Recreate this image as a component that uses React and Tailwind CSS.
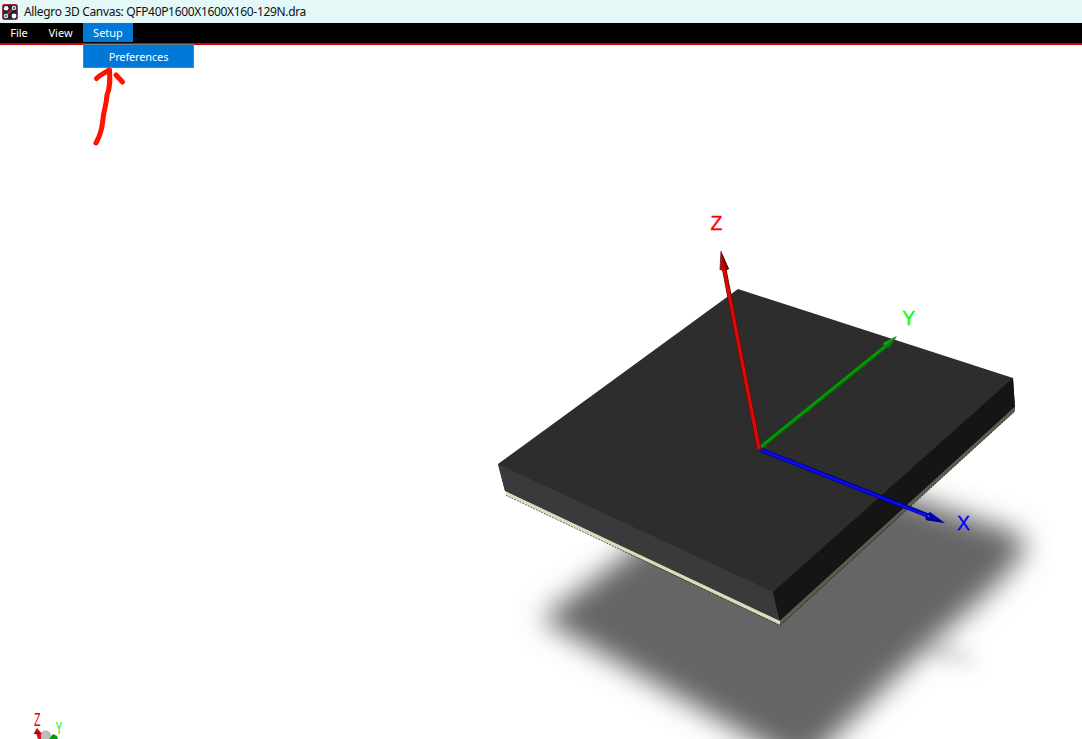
function AppIcon() {
  return (
    <svg className="size-4 shrink-0" viewBox="0 0 16 16">
      <rect x="0.7" y="0.7" width="14.6" height="14.6" rx="1.5" fill="#142a35" stroke="#b51d36" strokeWidth="1.2" />
      <path d="M3.8 11.8 12 3.8" stroke="#c9203a" strokeWidth="2" />
      <circle cx="4.2" cy="4.2" r="2.3" fill="#fff" />
      <circle cx="12" cy="12" r="2.4" fill="#fff" />
      <circle cx="12" cy="3.9" r="1.6" fill="#3d3540" stroke="#e9eef0" strokeWidth="1.2" />
      <circle cx="4" cy="12" r="1.6" fill="#3d3540" stroke="#e9eef0" strokeWidth="1.2" />
    </svg>
  );
}

function Scene() {
  return (
    <svg className="block h-[694px] w-[1082px]" viewBox="0 45 1082 694">
      <defs>
        <filter id="soft" x="-20%" y="-20%" width="140%" height="140%">
          <feGaussianBlur stdDeviation="14" />
        </filter>
        <filter id="wisp" x="-100%" y="-300%" width="300%" height="700%">
          <feGaussianBlur stdDeviation="10 8" />
        </filter>
        <linearGradient id="redShaft" gradientUnits="userSpaceOnUse" x1="739" y1="355" x2="744" y2="354">
          <stop offset="0" stopColor="#b00000" />
          <stop offset="0.45" stopColor="#e01010" />
          <stop offset="1" stopColor="#760000" />
        </linearGradient>
      </defs>

      <ellipse cx="950" cy="654" rx="26" ry="11" transform="rotate(18 950 654)" fill="#d2d2d2" opacity="0.6" filter="url(#wisp)" />
      <path d="M541 619 803 767 905 668 997 584 1028 547 1014 532 880 488 700 500Z" fill="#656565" filter="url(#soft)" />

      <path d="M738 289 1013 378 1015 408 780 622 505 491 498 464Z" fill="#2d2d2d" />
      <path d="M498 464 773 592 780 622 505 491Z" fill="#3a3a3a" />
      <path d="M773 592 1013 378 1015 408 780 622Z" fill="#151515" />
      <path d="M505 491 780 621 780 625 506 494.5Z" fill="#dcdcbc" />
      <path d="M506 495.3 780 625.3" stroke="#30302a" strokeWidth="0.8" strokeDasharray="2 1" />
      <path d="M780 621 1015 407 1015 411 780 625Z" fill="#5c5b4d" />
      <path d="M780 625.5 1015 411" stroke="#24241f" strokeWidth="1" strokeDasharray="2 1" />
      <path d="M780 621 1015 407" stroke="#85836f" strokeWidth="0.5" />

      <path d="M761 447 890 343" stroke="#007800" strokeWidth="4" />
      <path d="M761 446.5 889 343" stroke="#05a005" strokeWidth="1.8" />
      <path d="M897 336 883 343 884 347 889 348Z" fill="#087d08" />
      <path d="M897 336 883 343 885 346Z" fill="#11a511" />

      <path d="M759 449 724 268" stroke="#7d0000" strokeWidth="4.5" />
      <path d="M759 449 724 268" stroke="url(#redShaft)" strokeWidth="3.3" />
      <path d="M758 449 723.5 269" stroke="#d80c0c" strokeWidth="1.2" />
      <path d="M721 251 720 270 724 271 729 269Z" fill="#c80000" />
      <path d="M721 251 725.5 270.5 729 269Z" fill="#780000" />
      <path d="M721 251 720 270" stroke="#5d2020" strokeWidth="0.8" />

      <path d="M761 450 929 516" stroke="#00008d" strokeWidth="4.5" />
      <path d="M761 450 928 516" stroke="#0c0cf0" strokeWidth="2.5" />
      <path d="M945 523 930 512 925 516 926 520Z" fill="#0000c4" />
      <path d="M945 523 926 520 928 517Z" fill="#000087" />
      <ellipse cx="928.5" cy="516.5" rx="2" ry="3.2" fill="#050599" />
      <circle cx="928.5" cy="516" r="1" fill="#5555df" />

      <g className="font-['Liberation_Sans',sans-serif] text-[19.5px]" textAnchor="middle" strokeWidth="0.3">
        <text x="716.5" y="230" fill="#ff0000" stroke="#ff0000">Z</text>
        <text x="908.8" y="325" fill="#00ff00" stroke="#00ff00">Y</text>
        <text x="963.5" y="530" fill="#0000ff" stroke="#0000ff">X</text>
      </g>

      <g fill="none" stroke="#ff1200" strokeWidth="5" strokeLinecap="round" strokeLinejoin="round">
        <path d="M96 143C101 134 102 128 103.5 115C105 107 106.5 103 107 95C110.5 87 110 79 109.5 70" />
        <path d="M96.5 78.5C101 74 105 73 109 70" />
        <path d="M116 75 122.5 82" />
      </g>

      <circle cx="45.5" cy="736" r="5.7" fill="#bcbcbc" />
      <path d="M37 728 33.5 734 42 734Z" fill="#b90c15" />
      <path d="M36 733h5v6h-3Z" fill="#cc1520" />
      <path d="M35 733.5h5" stroke="#650c10" strokeWidth="1" />
      <path d="M49 739 53 734 57 736 58 739Z" fill="#079b12" />
      <g className="font-['Liberation_Sans',sans-serif]" textAnchor="middle">
        <text transform="translate(37.2 726) scale(.6 1)" x="0" y="0" className="text-[18px]" fill="#ee0000">Z</text>
        <text transform="translate(59 733.5) scale(.6 1)" x="0" y="0" className="text-[16px]" fill="#00ed00">Y</text>
      </g>
    </svg>
  );
}

export default function App() {
  return (
    <div className="flex h-[739px] w-[1082px] flex-col overflow-hidden bg-white font-['Noto_Sans',sans-serif]">
      <header className="flex h-[23px] shrink-0 items-center gap-1.5 bg-[#e4f8f7] pl-0.5">
        <AppIcon />
        <h1 className="whitespace-nowrap text-[12px] leading-4 tracking-[-0.33px] text-[#111]">Allegro 3D Canvas: QFP40P1600X1600X160-129N.dra</h1>
      </header>
      <nav className="relative flex h-[22px] shrink-0 items-start border-b-2 border-[#d20000] bg-black text-[11px] leading-[19px] text-white">
        <button className="h-[19px] w-[38px]">File</button>
        <button className="h-[19px] w-[45px]">View</button>
        <button className="h-[19px] w-[50px] bg-[#0078d7]">Setup</button>
        <div className="absolute left-[83px] top-[21px] z-10 flex h-6 w-[111px] items-center justify-center border border-[#6b7e8c] bg-[#0078d7]">
          <button className="leading-none tracking-[-0.15px]">Preferences</button>
        </div>
      </nav>
      <main className="min-h-0 flex-1">
        <Scene />
      </main>
    </div>
  );
}
